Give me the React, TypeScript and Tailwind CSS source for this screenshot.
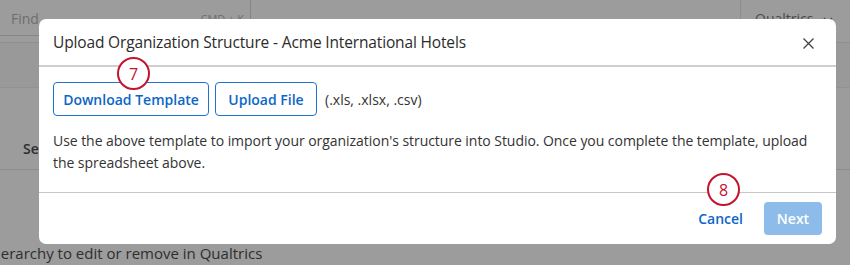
export default function App() {
  return (
    <div
      className="relative w-[850px] h-[265px] overflow-hidden bg-[#9c9c9c] text-[#2b2b2b]"
      style={{ fontFamily: '"Open Sans", "Liberation Sans", sans-serif' }}
    >
      {/* page behind the overlay */}
      <div className="flex flex-col h-full">
        <div className="flex h-[43px] border-b border-[#8e8e8e]">
          <div className="w-[251px] h-[36px] border border-t-0 border-l-0 border-[#858585] rounded-br-[4px] flex items-start justify-between pl-[11px] pr-[6px] pt-[8px] text-[14px] text-[#6e6e6e]">
            <span>Find</span>
            <span className="text-[11px] pt-[3px]">CMD + K</span>
          </div>
          <div className="flex-1" />
          <div className="w-[110px] border-l border-[#8e8e8e] flex items-start gap-[10px] pl-[14px] pt-[8px] text-[14px] text-[#4a4a4a]">
            <span>Qualtrics</span>
            <svg width="10" height="10" viewBox="0 0 10 10" className="mt-[7px]">
              <path d="M1 3L5 7L9 3" stroke="#4a4a4a" strokeWidth="1.3" fill="none" />
            </svg>
          </div>
        </div>
        <div className="h-[45px] border-b border-[#929292] bg-[#999999]" />
        <div className="h-[82px] border-b border-[#8c8c8c] pl-[23px] pt-[50px] text-[14px] font-semibold text-[#2e2e2e]">
          Se
        </div>
        <div className="flex-1" />
        <div className="h-[23px] text-[15px] text-[#2e2e2e] -ml-[3px]">
          ierarchy to edit or remove in Qualtrics
        </div>
      </div>

      {/* modal */}
      <div className="absolute left-[39px] top-[19px] w-[797px] h-[225px] bg-white rounded-[7px] flex flex-col">
        <div className="h-[48px] flex items-center justify-between pl-[14px] pr-[22px] border-b-2 border-[#cfcfcf]">
          <span className="text-[15.5px] text-[#2b2b2b] tracking-[-0.15px] pt-[2px]">
            Upload Organization Structure - Acme International Hotels
          </span>
          <svg width="11" height="11" viewBox="0 0 11 11" className="text-[#444] mt-[2px]">
            <path d="M0.5 0.5L10.5 10.5M10.5 0.5L0.5 10.5" stroke="currentColor" strokeWidth="1.3" />
          </svg>
        </div>
        <div className="relative px-[14px] pt-[15px] pb-[18px] border-b border-[#c6c6c6]">
          <div className="flex items-center gap-[6px]">
            <button className="h-[34px] w-[156px] border border-[#1d74d0] rounded-[4px] text-[14px] font-semibold text-[#0b66c9]">
              Download Template
            </button>
            <button className="h-[34px] w-[102px] border border-[#1d74d0] rounded-[4px] text-[14px] font-semibold text-[#0b66c9]">
              Upload File
            </button>
            <span className="ml-[2px] text-[14px] text-[#333]">(.xls, .xlsx, .csv)</span>
          </div>
          <p className="mt-[14px] text-[14px] leading-[22px] text-[#333] tracking-[-0.05px]">
            Use the above template to import your organization's structure into Studio. Once you
            complete the template, upload the spreadsheet above.
          </p>
          <div className="absolute left-[78px] top-[-10px] w-[33px] h-[33px] rounded-full border-2 border-[#c4122f] bg-white flex items-center justify-center text-[16px] text-[#c4122f]">
            7
          </div>
        </div>
        <div className="relative flex-1 flex items-center justify-end gap-[11px] pr-[14px]">
          <button className="px-[10px] h-[33px] text-[14px] font-semibold text-[#0b66c9]">Cancel</button>
          <button className="h-[33px] w-[58px] rounded-[4px] bg-[#8dbbea] text-[14px] font-semibold text-white">
            Next
          </button>
          <div className="absolute left-[668px] top-[-20px] w-[33px] h-[33px] rounded-full border-2 border-[#c4122f] bg-white flex items-center justify-center text-[16px] text-[#c4122f]">
            8
          </div>
        </div>
      </div>
    </div>
  );
}
